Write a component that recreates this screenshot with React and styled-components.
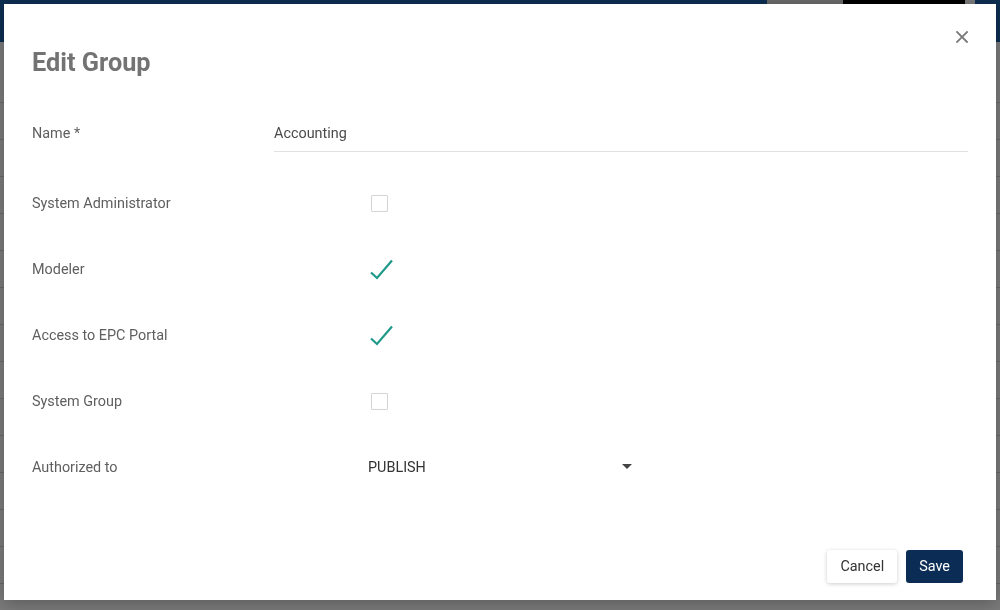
import styled, { createGlobalStyle } from 'styled-components'

const GlobalStyle = createGlobalStyle`
    html, body {
        margin: 0;
        padding: 0;
        width: 1000px;
        height: 610px;
        overflow: hidden;
        font-family: Roboto, "Liberation Sans", sans-serif;
    }
`

const rows = [
    { label: 'System Administrator', checked: false },
    { label: 'Modeler', checked: true },
    { label: 'Access to EPC Portal', checked: true },
    { label: 'System Group', checked: false },
]

const Close = () => (
    <svg width="12" height="12" viewBox="0 0 12 12">
        <path d="M1 1L11 11M11 1L1 11" stroke="#7a7a7a" strokeWidth="1.8" strokeLinecap="square" />
    </svg>
)

const Check = () => (
    <svg width="26" height="24" viewBox="0 0 26 24">
        <path d="M3 15.5L9 21L24 3.5" fill="none" stroke="#1f9a8a" strokeWidth="2.2" />
    </svg>
)

const Caret = () => (
    <svg width="10" height="6" viewBox="0 0 10 6">
        <path d="M0 0H10L5 5Z" fill="#444" />
    </svg>
)

const App = () => {
    return (
        <Page>
            <GlobalStyle />
            <Header>
                <HeaderSpacer />
                <HeaderChip light />
                <HeaderChip />
                <HeaderDot />
            </Header>
            <Content>
                {Array.from({ length: 14 }).map((_, i) => (
                    <TableRow key={i} />
                ))}
            </Content>

            <Backdrop>
                <Dialog>
                    <CloseButton><Close /></CloseButton>
                    <Title>Edit Group</Title>

                    <NameRow>
                        <Label width="242px">Name *</Label>
                        <Input>Accounting</Input>
                    </NameRow>

                    {rows.map((r) => (
                        <Row key={r.label}>
                            <Label>{r.label}</Label>
                            <Control>
                                {r.checked ? <Check /> : <Box />}
                            </Control>
                        </Row>
                    ))}

                    <Row>
                        <Label>Authorized to</Label>
                        <Control>
                            <Select>
                                <span>PUBLISH</span>
                                <Caret />
                            </Select>
                        </Control>
                    </Row>

                    <Footer>
                        <Button>Cancel</Button>
                        <Button primary>Save</Button>
                    </Footer>
                </Dialog>
            </Backdrop>
        </Page>
    )
}

const Page = styled.div`
    width: 1000px;
    height: 610px;
    background: #fff;
    display: flex;
    flex-direction: column;
    overflow: hidden;
`

const Header = styled.div`
    height: 42px;
    flex-shrink: 0;
    background: #1b5fa8;
    display: flex;
    align-items: flex-start;
`

const HeaderSpacer = styled.div`
    flex: 1;
`

const HeaderChip = styled.div`
    width: ${(p) => (p.light ? '76px' : '122px')};
    height: 20px;
    background: ${(p) => (p.light ? '#dadada' : '#000')};
    border-radius: ${(p) => (p.light ? '0' : '0 0 10px 10px')};
`

const HeaderDot = styled.div`
    width: 10px;
    height: 8px;
    background: #fff;
    border-radius: 0 0 5px 5px;
    margin-right: 25px;
`

const Content = styled.div`
    flex: 1;
    display: flex;
    flex-direction: column;
    padding-top: 24px;
    overflow: hidden;
`

const TableRow = styled.div`
    height: 36px;
    flex-shrink: 0;
    border-bottom: 1px solid #d8d8d8;
`

const Backdrop = styled.div`
    position: fixed;
    inset: 0;
    background: rgba(0, 0, 0, 0.52);
`

const Dialog = styled.div`
    position: absolute;
    top: 4px;
    left: 4px;
    width: 992px;
    height: 596px;
    box-sizing: border-box;
    background: #fff;
    padding: 45px 28px 17px 28px;
    display: flex;
    flex-direction: column;
    box-shadow: 0 4px 16px rgba(0, 0, 0, 0.25);
`

const CloseButton = styled.div`
    position: absolute;
    top: 27px;
    right: 28px;
    width: 12px;
    height: 12px;
    display: flex;
`

const Title = styled.h2`
    margin: 0;
    font-size: 25.3px;
    line-height: 28px;
    font-weight: 700;
    color: #737373;
`

const NameRow = styled.div`
    display: flex;
    margin-top: 38px;
    margin-bottom: 18px;
    height: 37px;
`

const Label = styled.div`
    width: ${(p) => p.width || '336px'};
    font-size: 14.4px;
    color: #5f5f5f;
    display: flex;
    align-items: center;
    flex-shrink: 0;
`

const Input = styled.div`
    flex: 1;
    font-size: 14.4px;
    color: #4a4a4a;
    display: flex;
    align-items: center;
    border-bottom: 1px solid #e2e2e2;
`

const Row = styled.div`
    display: flex;
    height: 66px;
    align-items: center;
`

const Control = styled.div`
    display: flex;
    align-items: center;
`

const Box = styled.div`
    width: 15px;
    height: 15px;
    margin-left: 3px;
    border: 1.5px solid #d4d4d4;
    border-radius: 1px;
`

const Select = styled.div`
    width: 270px;
    display: flex;
    justify-content: space-between;
    align-items: center;
    font-size: 14.4px;
    color: #333;
    padding-right: 6px;
    box-sizing: border-box;
`

const Footer = styled.div`
    margin-top: auto;
    display: flex;
    justify-content: flex-end;
    gap: 9px;
    padding-right: 5px;
`

const Button = styled.button`
    height: 33px;
    padding: 0 13px;
    border: none;
    border-radius: 3px;
    font-family: Roboto, "Liberation Sans", sans-serif;
    font-size: 14.4px;
    background: ${(p) => (p.primary ? '#0b2d55' : '#fff')};
    color: ${(p) => (p.primary ? '#fff' : '#333')};
    box-shadow: ${(p) => (p.primary ? 'none' : '0 1px 4px rgba(0,0,0,0.2)')};
`

export default App
